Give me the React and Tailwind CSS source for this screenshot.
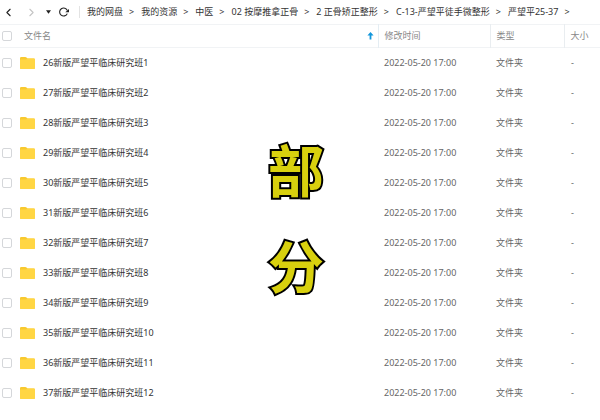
import React, { useState } from 'react';
import { ChevronLeft, ChevronRight } from 'lucide-react';

const crumbs = ['我的网盘', '我的资源', '中医', '02 按摩推拿正骨', '2 正骨矫正整形', 'C-13-严望平徒手微整形', '严望平25-37'];

const folders = Array.from({ length: 12 }, (_, i) => ({
  name: `${26 + i}新版严望平临床研究班${i + 1}`,
  modified: '2022-05-20 17:00',
  type: '文件夹',
  size: '-'
}));

const FolderIcon = () => (
  <svg width="15" height="12" viewBox="0 0 15 12" className="shrink-0" aria-hidden="true">
    <path d="M0 1.2Q0 0 1.2 0H5.3Q6 0 6.5.5L7.6 1.5H13.8Q15 1.5 15 2.7V10.8Q15 12 13.8 12H1.2Q0 12 0 10.8Z" fill="#f8c92f" />
    <path d="M0 3.2Q0 2.6.6 2.6H5.4Q6 2.6 6.5 2.2L7.4 1.5H13.8Q15 1.5 15 2.7V10.8Q15 12 13.8 12H1.2Q0 12 0 10.8Z" fill="#ffd644" />
  </svg>
);

const Checkbox = ({ label, checked, onChange }) => (
  <input
    type="checkbox"
    aria-label={label}
    checked={checked}
    onChange={onChange}
    className="block size-[10px] appearance-none rounded-[2px] border border-[#d5d7da] bg-white checked:border-sky-500 checked:bg-sky-500"
  />
);

const Toolbar = () => (
  <nav className="flex h-[24px] items-center text-[#333]">
    <button aria-label="后退" className="ml-[2px] text-[#222]">
      <ChevronLeft size={13} strokeWidth={2} />
    </button>
    <button aria-label="前进" className="ml-[10px] text-[#c4c4c4]" disabled>
      <ChevronRight size={13} strokeWidth={2} />
    </button>
    <button aria-label="历史" className="ml-2 text-[#222]">
      <svg width="5" height="4" viewBox="0 0 5 4">
        <path d="M0 .3H5L2.5 3.7Z" fill="currentColor" />
      </svg>
    </button>
    <button aria-label="刷新" className="ml-2 text-[#222]">
      <svg width="10" height="10" viewBox="0 0 10 10" fill="none">
        <path d="M8.3 6.6A4 4 0 1 1 8.4 3.6" stroke="currentColor" strokeWidth="1.1" />
        <path d="M10 2V5.2H6.3Z" fill="currentColor" />
      </svg>
    </button>
    <span className="ml-[10px] h-3 w-px bg-[#e3e3e3]" />
    <ol className="ml-[7px] flex items-center whitespace-nowrap">
      {crumbs.map((crumb) => (
        <li key={crumb} className="flex items-center">
          <a href="#">{crumb}</a>
          <span className="mr-[7px] ml-[6px]">&gt;</span>
        </li>
      ))}
    </ol>
  </nav>
);

const App = () => {
  const [selected, setSelected] = useState([]);

  const toggle = (name) => {
    setSelected((prev) => (prev.includes(name) ? prev.filter((n) => n !== name) : [...prev, name]));
  };

  const allSelected = selected.length === folders.length;

  return (
    <div className="relative min-h-screen overflow-hidden bg-white font-['Noto_Sans','Noto_Sans_CJK_SC',sans-serif] text-[9px] leading-[12px]">
      <Toolbar />

      <table className="w-full table-fixed border-collapse text-left text-[#666]">
        <colgroup>
          <col className="w-[20px]" />
          <col />
          <col className="w-[112px]" />
          <col className="w-[74px]" />
          <col className="w-[36px]" />
        </colgroup>
        <thead>
          <tr className="h-[23px] border-y border-[#f1f3f5] text-[#888]">
            <th className="pl-[2px]">
              <Checkbox
                label="全选"
                checked={allSelected}
                onChange={() => setSelected(allSelected ? [] : folders.map((f) => f.name))}
              />
            </th>
            <th className="pr-1 pl-1 font-normal">
              <div className="flex items-center justify-between">
                文件名
                <svg width="7" height="8" viewBox="0 0 7 8" aria-hidden="true">
                  <path d="M3.5 0L6.6 3.6H4.4V7.5H2.6V3.6H.4Z" fill="#1296db" />
                </svg>
              </div>
            </th>
            <th className="border-l border-[#e4edf3] pl-[6px] font-normal">修改时间</th>
            <th className="border-l border-[#e9edf0] pl-[6px] font-normal">类型</th>
            <th className="border-l border-[#e9edf0] pl-[6px] font-normal">大小</th>
          </tr>
        </thead>
        <tbody>
          {folders.map((folder) => (
            <tr key={folder.name} className="h-[30px]">
              <td className="pl-[2px]">
                <Checkbox
                  label={folder.name}
                  checked={selected.includes(folder.name)}
                  onChange={() => toggle(folder.name)}
                />
              </td>
              <td>
                <div className="flex items-center gap-2 text-[#333]">
                  <FolderIcon />
                  {folder.name}
                </div>
              </td>
              <td className="pl-[6px] whitespace-nowrap">{folder.modified}</td>
              <td className="pl-[6px]">{folder.type}</td>
              <td className="pl-[7px]">{folder.size}</td>
            </tr>
          ))}
        </tbody>
      </table>

      {/* Watermark over the list */}
      <div className="pointer-events-none absolute inset-x-0 top-[122px] flex flex-col items-center pr-2 text-[56px] leading-[96px] font-bold text-[#d8d00e] [-webkit-text-stroke:4px_#000] [paint-order:stroke]">
        <span>部</span>
        <span>分</span>
      </div>
    </div>
  );
};

export default App;
